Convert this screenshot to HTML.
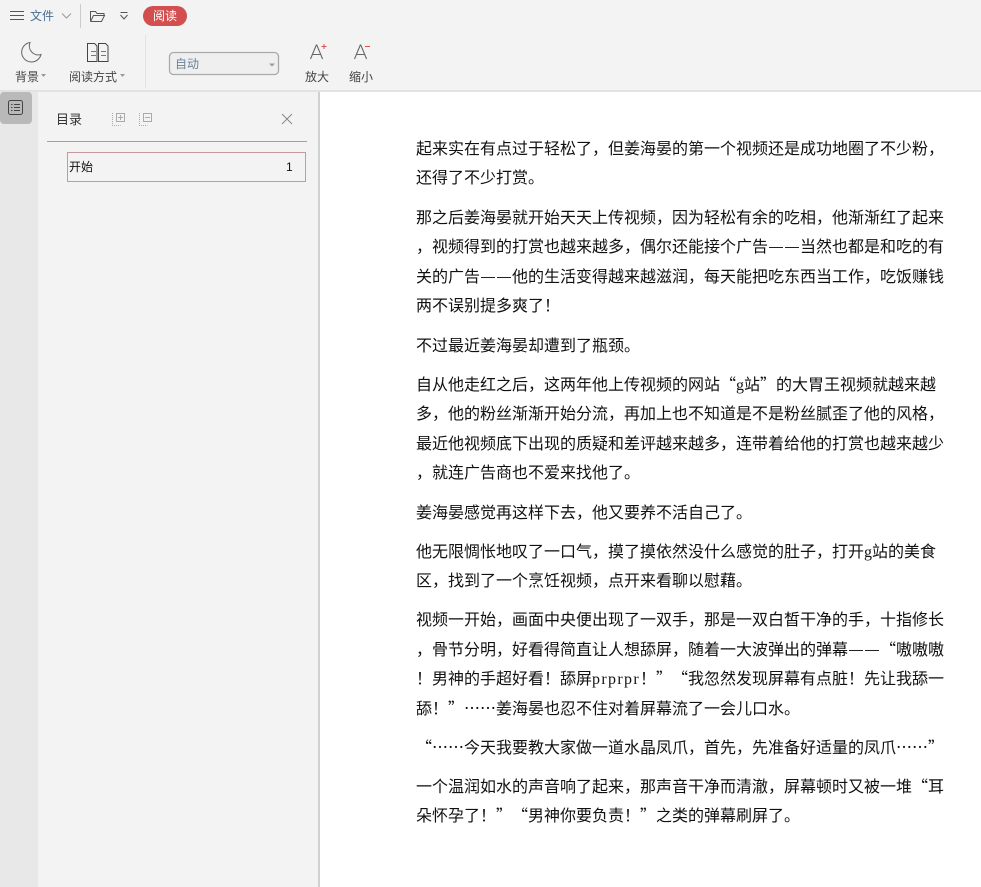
<!DOCTYPE html>
<html lang="zh-CN"><head><meta charset="utf-8"><style>
html,body{margin:0;padding:0;width:981px;height:887px;overflow:hidden;background:#fff}
body{position:relative;font-family:"Liberation Sans","Noto Sans CJK SC",sans-serif}
.a{position:absolute}
.t{position:absolute;white-space:nowrap;font-size:12px;line-height:14px;color:#444}
.l{position:absolute;left:416px;white-space:nowrap;font-family:"WenQuanYi Zen Hei","Noto Sans CJK SC",sans-serif;font-size:16px;line-height:20px;height:20px;margin-top:-1px;color:#111}
.l i{font-style:normal;font-family:"Liberation Serif",serif;display:inline-block;width:8px;text-align:center}
.l b{position:relative;font-weight:normal;display:inline-block;width:16px;height:20px;line-height:20px;vertical-align:top;color:transparent;overflow:hidden}
.l b::after{content:"";position:absolute;left:1px;top:12px;width:14px;height:1px;background:#222}
.l u{text-decoration:none;display:inline-block;width:16px}
.l u.o{text-align:right}
.l u.c{text-align:left}
svg{position:absolute;overflow:visible}
</style></head><body>
<div class="a" style="left:0;top:0;width:981px;height:90px;background:#f3f3f3"></div>
<div class="a" style="left:0;top:90px;width:981px;height:2px;background:#e2e2e2"></div>
<svg style="left:0;top:0" width="400" height="90" fill="none">
<path d="M10 11.500H24M10 15.500H24M10 19.500H24" stroke="#555" stroke-width="1"/>
<path d="M62 13.500l4.500 4.500 4.500-4.500" stroke="#999"/>
<path d="M80.500 4V28" stroke="#ccc"/>
<path d="M90.500 21.500V11.500h5l1.500 2h7v2M90.500 21.500h11l3-6h-11l-3 6" stroke="#555"/>
<path d="M120.500 12.500h7M120.500 15l3.500 4 3.500-4" stroke="#555"/>
<path d="M30 42.500a9.800 9.800 0 1 0 11 12a9 9 0 0 1-11-12z" stroke="#666"/>
<path d="M87.500 43.500h7l2.500 2.500v15.500h-9.500zM98.500 43.500h7l2.500 2.500v15.500h-9.500z" stroke="#444"/>
<path d="M91 51.500h5M91 55.500h5M101 51.500h5M101 55.500h5" stroke="#777"/>
<path d="M41 74l2.500 3 2.500-3zM120 74l2.500 3 2.500-3z" fill="#999"/>
<path d="M145.500 35V88" stroke="#e2e2e2"/>
<rect x="169.500" y="52.500" width="109" height="22" rx="4" fill="#efefef" stroke="#aaa" stroke-width="1.300"/>
<path d="M269 63.500h6l-3 3z" fill="#999"/>
<path d="M310.500 59l5.800-14h.5l5.800 14M312.500 54.500h8.500" stroke="#666" stroke-width="1.100"/>
<path d="M321.500 46.500h5M324 44v5" stroke="#d9534f"/>
<path d="M354.500 59l5.800-14h.5l5.800 14M356.500 54.500h8.500" stroke="#666" stroke-width="1.100"/>
<path d="M365 46.500h5" stroke="#d9534f"/>
</svg>
<div class="t" style="left:30px;top:9px;color:#4a6f94">文件</div>
<div class="a" style="left:143px;top:6px;width:44px;height:20px;border-radius:10px;background:#d34f4f;color:#fff;font-size:12px;line-height:20px;text-align:center">阅读</div>
<div class="t" style="left:15px;top:70px">背景</div>
<div class="t" style="left:69px;top:70px">阅读方式</div>
<div class="t" style="left:175px;top:57px;color:#6b8299">自动</div>
<div class="t" style="left:305px;top:70px">放大</div>
<div class="t" style="left:349px;top:70px">缩小</div>

<div class="a" style="left:0;top:92px;width:38px;height:795px;background:#e8e8e8"></div>
<div class="a" style="left:0;top:92px;width:32px;height:32px;border-radius:4px;background:#b9b9b9"></div>
<svg style="left:0;top:92px" width="40" height="32" fill="none">
<rect x="8.500" y="8.500" width="14" height="14" rx="2" stroke="#444"/>
<path d="M11 12.500h1.500M14 12.500h6M11 15.500h1.500M14 15.500h6M11 18.500h1.500M14 18.500h6" stroke="#444"/>
</svg>
<div class="a" style="left:38px;top:92px;width:280px;height:795px;background:#f3f3f3"></div>
<div class="a" style="left:318px;top:92px;width:2px;height:795px;background:#d0d0d0"></div>
<div class="t" style="left:56px;top:113px;color:#333;font-size:13px">目录</div>
<svg style="left:100px;top:100px" width="200" height="40" fill="none">
<rect x="16.500" y="13.500" width="8" height="8" stroke="#aaa" stroke-width="1"/><path d="M18 17.500h5M20.500 15v5" stroke="#aaa"/>
<path d="M12.500 13v12.500h8" stroke="#aaa" stroke-dasharray="1 1"/>
<rect x="43.500" y="13.500" width="8" height="8" stroke="#aaa"/><path d="M45 17.500h5" stroke="#aaa"/>
<path d="M39.500 13v12.500h8" stroke="#aaa" stroke-dasharray="1 1"/>
<path d="M182 14l10 10M192 14l-10 10" stroke="#888"/>
</svg>
<div class="a" style="left:47px;top:141px;width:260px;height:1px;background:#a0a0a0"></div>
<div class="a" style="left:67px;top:152px;width:237px;height:28px;border:1px solid #c49aa0"></div>
<div class="t" style="left:69px;top:160px;color:#111">开始</div>
<div class="t" style="left:286px;top:160px;color:#111">1</div>

<div class="l" style="top:138px">起来实在有点过于轻松了，但姜海晏的第一个视频还是成功地圈了不少粉，</div>
<div class="l" style="top:167px">还得了不少打赏。</div>
<div class="l" style="top:207px">那之后姜海晏就开始天天上传视频，因为轻松有余的吃相，他渐渐红了起来</div>
<div class="l" style="top:236px">，视频得到的打赏也越来越多，偶尔还能接个广告<b>—</b><b>—</b>当然也都是和吃的有</div>
<div class="l" style="top:266px">关的广告<b>—</b><b>—</b>他的生活变得越来越滋润，每天能把吃东西当工作，吃饭赚钱</div>
<div class="l" style="top:295px">两不误别提多爽了！</div>
<div class="l" style="top:335px">不过最近姜海晏却遭到了瓶颈。</div>
<div class="l" style="top:374px">自从他走红之后，这两年他上传视频的网站<u class="o">“</u><i>g</i>站<u class="c">”</u>的大胃王视频就越来越</div>
<div class="l" style="top:403px">多，他的粉丝渐渐开始分流，再加上也不知道是不是粉丝腻歪了他的风格，</div>
<div class="l" style="top:433px">最近他视频底下出现的质疑和差评越来越多，连带着给他的打赏也越来越少</div>
<div class="l" style="top:462px">，就连广告商也不爱来找他了。</div>
<div class="l" style="top:502px">姜海晏感觉再这样下去，他又要养不活自己了。</div>
<div class="l" style="top:541px">他无限惆怅地叹了一口气，摸了摸依然没什么感觉的肚子，打开<i>g</i>站的美食</div>
<div class="l" style="top:570px">区，找到了一个烹饪视频，点开来看聊以慰藉。</div>
<div class="l" style="top:609px">视频一开始，画面中央便出现了一双手，那是一双白皙干净的手，十指修长</div>
<div class="l" style="top:639px">，骨节分明，好看得简直让人想舔屏，随着一大波弹出的弹幕<b>—</b><b>—</b><u class="o">“</u>嗷嗷嗷</div>
<div class="l" style="top:668px">！男神的手超好看！舔屏<i>p</i><i>r</i><i>p</i><i>r</i><i>p</i><i>r</i>！<u class="c">”</u><u class="o">“</u>我忽然发现屏幕有点脏！先让我舔一</div>
<div class="l" style="top:698px">舔！<u class="c">”</u>……姜海晏也忍不住对着屏幕流了一会儿口水。</div>
<div class="l" style="top:737px"><u class="o">“</u>……今天我要教大家做一道水晶凤爪，首先，先准备好适量的凤爪……<u class="c">”</u></div>
<div class="l" style="top:776px">一个温润如水的声音响了起来，那声音干净而清澈，屏幕顿时又被一堆<u class="o">“</u>耳</div>
<div class="l" style="top:805px">朵怀孕了！<u class="c">”</u><u class="o">“</u>男神你要负责！<u class="c">”</u>之类的弹幕刷屏了。</div>
</body></html>
